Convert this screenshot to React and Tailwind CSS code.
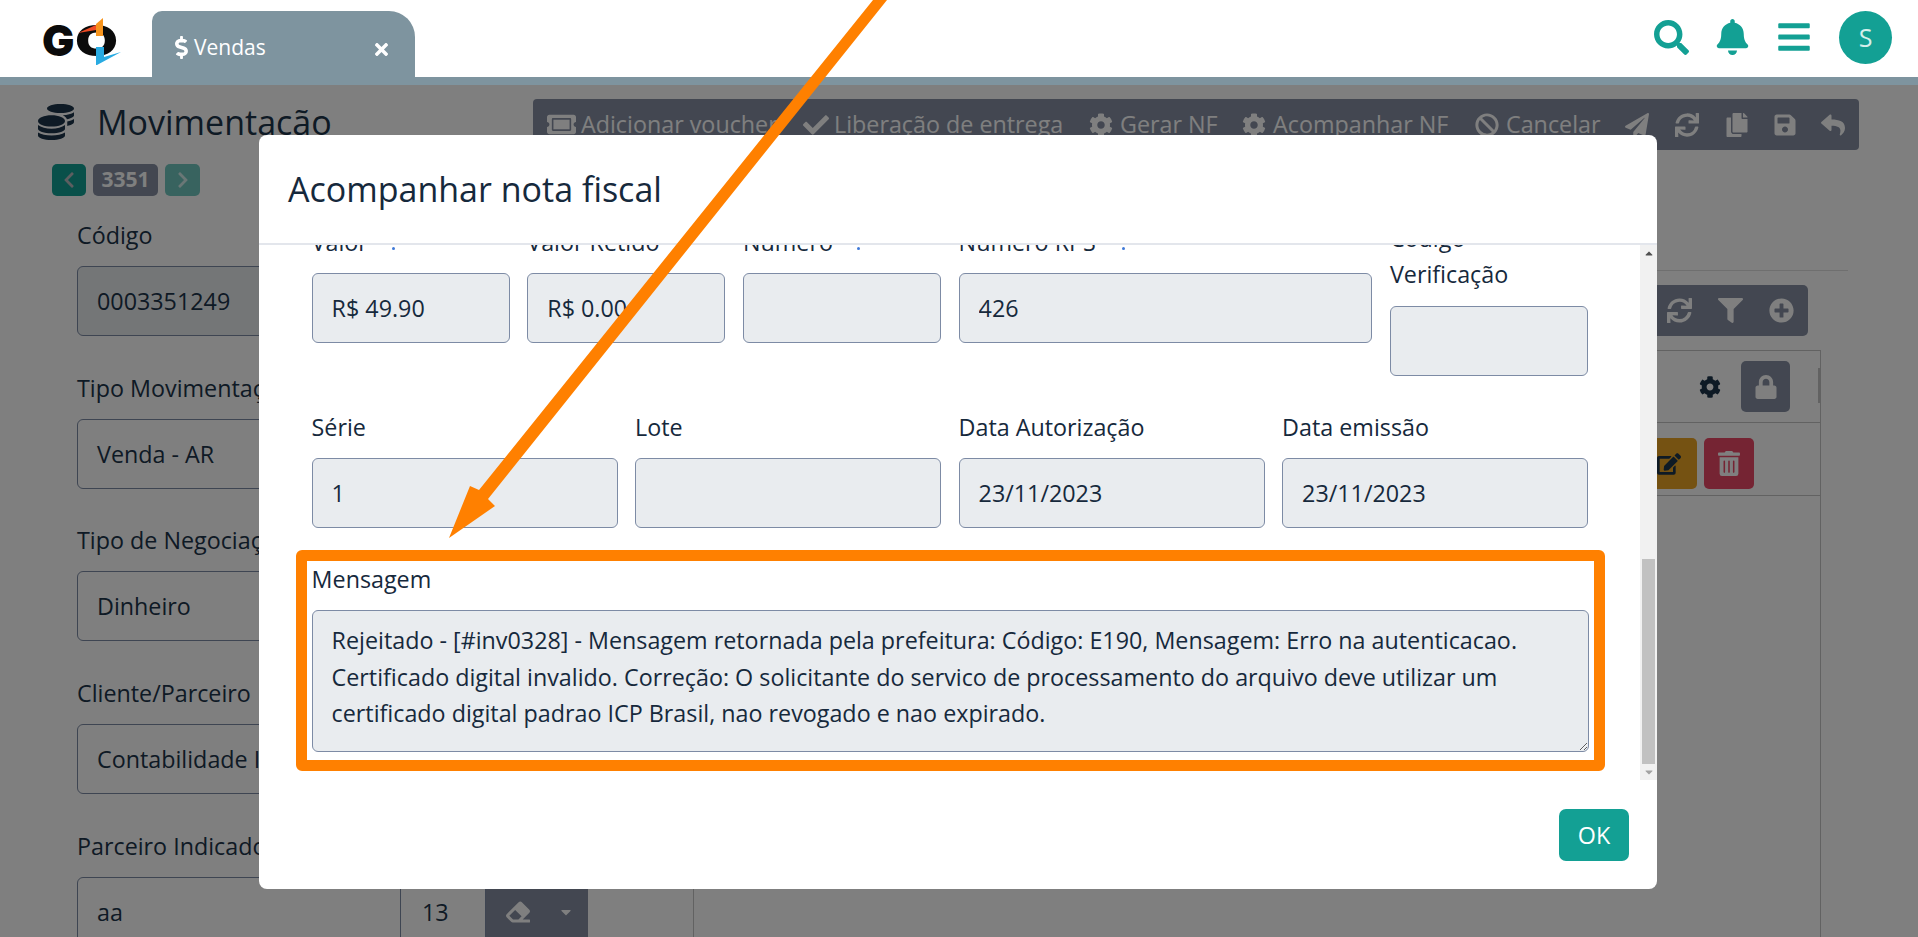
import React from "react";
import {
  FaBan,
  FaBars,
  FaBell,
  FaCaretDown,
  FaCheck,
  FaChevronLeft,
  FaChevronRight,
  FaCoins,
  FaCog,
  FaCopy,
  FaDollarSign,
  FaEdit,
  FaEraser,
  FaFilter,
  FaLock,
  FaPaperPlane,
  FaPlusCircle,
  FaReply,
  FaSave,
  FaSearch,
  FaSync,
  FaTicketAlt,
  FaTimes,
  FaTrashAlt,
} from "react-icons/fa";

const FONT = "font-['Open_Sans','Noto_Sans',sans-serif]";

const Logo = () => (
  <svg width="100" height="65" viewBox="0 0 100 65" className="ml-[30px] mt-[10px] shrink-0">
    <text x="12" y="46" fontFamily="Inter, 'Liberation Sans', sans-serif" fontWeight="900" fontSize="43" fill="#0b0b0b">
      G
    </text>
    <text
      x="45"
      y="46"
      textLength="43"
      lengthAdjust="spacingAndGlyphs"
      fontFamily="Inter, 'Liberation Sans', sans-serif"
      fontWeight="900"
      fontSize="43"
      fill="#0b0b0b"
    >
      O
    </text>
    <path d="M48 23 L66 15 L66 20 Z" fill="#ef4a23" />
    <path d="M66 14 L73 8 L73 26 L66 26 Z" fill="#f7941d" />
    <path d="M66 37 L74 37 L74 47 L91 42 L67 55 L66 55 Z" fill="#29abe2" />
  </svg>
);

const PageField = ({ label, value, shaded, className = "mb-[34px]" }) => (
  <div className={className}>
    <label className="block h-9 leading-9 mb-[13px] whitespace-nowrap">{label}</label>
    <div
      className={`h-[70px] w-[560px] flex items-center px-[19px] rounded-md border border-[#7d8ba5] whitespace-nowrap ${
        shaded ? "bg-[#e9ecef]" : "bg-white"
      }`}
    >
      {value}
    </div>
  </div>
);

const ToolItem = ({ width, icon, text, gap = "gap-[7px]" }) => (
  <div className={`flex items-center shrink-0 whitespace-nowrap ${gap} ${width}`}>
    {icon}
    {text && <span>{text}</span>}
  </div>
);

const Page = () => (
  <main className="flex flex-col pt-[14px] text-[#1c344a]">
    {/* titulo + toolbar */}
    <div className="flex items-start justify-between pl-[38px] pr-[59px]">
      <div className="flex items-center gap-[23px] h-[46px]">
        <FaCoins className="w-9 h-9" />
        <h1 className="text-[34px] font-medium whitespace-nowrap">Movimentação</h1>
      </div>
      <div className="flex items-center h-[51px] w-[1326px] pl-[14px] rounded-[4px] bg-[#868fa3] text-white text-[23.3px]">
        <ToolItem width="w-[256px]" gap="gap-[5px]" icon={<FaTicketAlt className="w-[29px] h-[29px]" />} text="Adicionar voucher" />
        <ToolItem width="w-[286px]" gap="gap-[5px]" icon={<FaCheck className="w-[26px] h-[26px]" />} text="Liberação de entrega" />
        <ToolItem width="w-[153px]" icon={<FaCog className="w-6 h-6" />} text="Gerar NF" />
        <ToolItem width="w-[233px]" icon={<FaCog className="w-6 h-6" />} text="Acompanhar NF" />
        <ToolItem width="w-[150px]" icon={<FaBan className="w-6 h-6" />} text="Cancelar" />
        <ToolItem width="w-[50px]" icon={<FaPaperPlane className="w-6 h-6" />} />
        <ToolItem width="w-[50px]" icon={<FaSync className="w-6 h-6" />} />
        <ToolItem width="w-[48px]" icon={<FaCopy className="w-6 h-6" />} />
        <ToolItem width="w-[48px]" icon={<FaSave className="w-6 h-6" />} />
        <ToolItem width="w-[28px]" icon={<FaReply className="w-6 h-6" />} />
      </div>
    </div>

    <div className="flex mt-[14px]">
      {/* formulario */}
      <div className="w-[693px] shrink-0 pl-[77px]">
        <div className="flex gap-[7px] -ml-[25px] mb-[21px] h-8">
          <button className="w-[34px] flex items-center justify-center rounded-[5px] bg-[#13a094] text-[#b8bcc0]">
            <FaChevronLeft className="w-[18px] h-[18px]" />
          </button>
          <span className="w-[65px] flex items-center justify-center rounded-[5px] bg-[#868fa3] text-white text-[21px] font-bold">
            3351
          </span>
          <button className="w-[35px] flex items-center justify-center rounded-[5px] bg-[#13a094]/60 text-white/70">
            <FaChevronRight className="w-[18px] h-[18px]" />
          </button>
        </div>
        <div className="text-[23.3px]">
          <PageField label="Código" value="0003351249" shaded />
          <PageField label="Tipo Movimentação" value="Venda - AR" className="mb-[33px]" />
          <PageField label="Tipo de Negociação" value="Dinheiro" />
          <PageField label="Cliente/Parceiro" value="Contabilidade I" />
          <div>
            <label className="block h-9 leading-9 mb-[13px] whitespace-nowrap">Parceiro Indicador</label>
            <div className="flex h-[70px]">
              <div className="w-[324px] flex items-center px-[19px] rounded-l-md border border-[#7d8ba5]">aa</div>
              <div className="w-[85px] flex items-center px-[21px] border-y border-r border-[#7d8ba5]">13</div>
              <div className="w-[102px] flex items-center pl-[20px] gap-[28px] bg-[#868fa3] text-white">
                <FaEraser className="w-6 h-6" />
                <FaCaretDown className="w-4 h-4" />
              </div>
            </div>
          </div>
        </div>
      </div>

      {/* painel direito */}
      <div className="w-[1128px] shrink-0">
        <div className="h-px w-[1155px] mt-[106px] bg-[#dedede]" />
        <div className="flex justify-end mt-[14px] mr-[13px]">
          <div className="flex items-center gap-[26px] h-[51px] pl-[16px] pr-[14px] rounded-[5px] bg-[#868fa3] text-white">
            <FaSync className="w-[25px] h-[25px]" />
            <FaFilter className="w-[25px] h-[25px]" />
            <FaPlusCircle className="w-[25px] h-[25px]" />
          </div>
        </div>
        <div className="mt-[14px] h-[600px] border border-[#c4c4c4]">
          <div className="relative flex items-center justify-end gap-[20px] h-[72px] pr-[30px] border-b border-[#c4c4c4]">
            <FaCog className="w-[22px] h-[22px]" />
            <span className="w-[49px] h-[51px] flex items-center justify-center rounded-[5px] bg-[#868fa3] text-white">
              <FaLock className="w-6 h-6" />
            </span>
            <span className="absolute right-0 top-[17px] w-[2px] h-[35px] bg-[#c4c4c4]" />
          </div>
          <div className="flex items-start justify-end gap-[7px] h-[73px] pt-[15px] pr-[66px] border-b border-[#c4c4c4]">
            <span className="w-[57px] h-[51px] flex items-center justify-center rounded-[5px] bg-[#eba425] text-[#1c344a]">
              <FaEdit className="w-6 h-6" />
            </span>
            <span className="w-[50px] h-[51px] flex items-center justify-center rounded-[5px] bg-[#ea4866] text-white">
              <FaTrashAlt className="w-[22px] h-[25px]" />
            </span>
          </div>
        </div>
      </div>
    </div>
  </main>
);

const Field = ({ label, value, className, dot, labelClass = "mb-[13px]" }) => (
  <div className={className}>
    <label className={`relative block leading-9 ${labelClass}`}>
      {label}
      {dot && <span className={`absolute bottom-[10px] w-[3px] h-[3px] rounded-full bg-[#3f79d8] ${dot}`} />}
    </label>
    <input
      readOnly
      value={value}
      className="block w-full h-[70px] px-[19px] rounded-md border border-[#7d8ba5] bg-[#e9ecef] outline-none"
    />
  </div>
);

const Modal = () => (
  <div className="absolute z-30 top-[135px] left-[259px] w-[1398px] h-[754px] flex flex-col rounded-lg bg-white text-[#16293c]">
    <div className="h-[110px] shrink-0 flex items-center pl-[29px] border-b-2 border-[#e3e6ec]">
      <h2 className="text-[34px] font-medium">Acompanhar nota fiscal</h2>
    </div>

    <div className="flex h-[535px] shrink-0">
      <div className="flex-1 min-w-0 overflow-hidden pl-[52.6px] pr-[52px] text-[23.3px]">
        <div className="grid grid-cols-12 gap-x-[17.6px] items-start -mt-[21px]">
          <Field className="col-span-2" label="Valor" value="R$ 49.90" dot="left-[80px]" />
          <Field className="col-span-2" label="Valor Retido" value="R$ 0.00" />
          <Field className="col-span-2" label="Número" value="" dot="left-[114px]" />
          <Field className="col-span-4" label="Número RPS" value="426" dot="left-[163px]" />
          <Field
            className="col-span-2 -mt-[4px]"
            labelClass="mb-[14px]"
            label={<>Código<br />Verificação</>}
            value=""
          />
        </div>
        <div className="grid grid-cols-12 gap-x-[17.6px] mt-[33px]">
          <Field className="col-span-3" label="Série" value="1" />
          <Field className="col-span-3" label="Lote" value="" />
          <Field className="col-span-3" label="Data Autorização" value="23/11/2023" />
          <Field className="col-span-3" label="Data emissão" value="23/11/2023" />
        </div>

        {/* destaque em laranja */}
        <div className="mt-[22px] -ml-[16px] -mr-[17px] px-[5px] pb-[8px] rounded-md border-[11px] border-[#ff8000]">
          <label className="block leading-9 mb-[13px]">Mensagem</label>
          <textarea
            readOnly
            value="Rejeitado - [#inv0328] - Mensagem retornada pela prefeitura: Código: E190, Mensagem: Erro na autenticacao. Certificado digital invalido. Correção: O solicitante do servico de processamento do arquivo deve utilizar um certificado digital padrao ICP Brasil, nao revogado e nao expirado."
            className="block w-full h-[142px] px-[19px] pt-[11px] pb-[10px] leading-[36.5px] rounded-md border border-[#7d8ba5] bg-[#e9ecef] outline-none"
          />
        </div>
      </div>

      {/* barra de rolagem */}
      <div className="relative w-[17px] shrink-0 bg-[#f1f1f1] flex flex-col items-center">
        <FaCaretDown className="w-3 h-3 mt-[3px] rotate-180 text-[#505050]" />
        <div className="w-[13px] h-[205px] mt-[299px] bg-[#c1c1c1]" />
        <FaCaretDown className="w-3 h-3 mt-[2px] text-[#a3a3a3]" />
      </div>
    </div>

    <div className="flex-1 flex justify-end pt-[29px] pr-[28px]">
      <button className="w-[70px] h-[52px] rounded-[7px] bg-[#13a094] text-white text-[23.3px]">OK</button>
    </div>
  </div>
);

const App = () => {
  return (
    <div className={`relative w-[1918px] h-[937px] overflow-hidden bg-white ${FONT}`}>
      {/* topo */}
      <header className="relative z-20 flex bg-white h-[77px]">
        <div className="w-[152px] shrink-0">
          <Logo />
        </div>
        <div className="flex items-center w-[263px] h-[66px] mt-[11px] pl-[23px] pr-[24px] pt-[7px] rounded-tl-[10px] rounded-tr-[26px] bg-[#7e949f] text-white text-[21px]">
          <FaDollarSign className="w-[15px] h-[23px] -ml-[1px]" />
          <span className="ml-[5px]">Vendas</span>
          <FaTimes className="w-[19px] h-[19px] ml-auto mt-[4px]" />
        </div>
        <div className="ml-auto flex items-center pr-[26px] text-[#13a094]">
          <FaSearch className="w-[35px] h-[35px] -mt-[3px]" />
          <FaBell className="w-[33px] h-[36px] ml-[27px] -mt-[3px]" />
          <FaBars className="w-[32px] h-[36px] ml-[29px] -mt-[3px]" />
          <span className="w-[53px] h-[53px] ml-[29px] -mt-[2px] flex items-center justify-center rounded-full bg-[#13a094] text-[#d5efec] text-[25px]">
            S
          </span>
        </div>
      </header>
      <div className="relative z-20 h-[8px] bg-[#7e949f]" />

      <Page />

      {/* fundo do modal */}
      <div className="absolute z-10 inset-x-0 bottom-0 top-[85px] bg-black/50" />
      <Modal />

      {/* seta de anotacao */}
      <svg className="absolute z-40 inset-0 pointer-events-none" width="1918" height="937" viewBox="0 0 1918 937">
        <path d="M873 0 L887 0 L488 499 L495 506 L449 538 L470 486 L479 490 Z" fill="#ff8000" />
      </svg>
    </div>
  );
};

export default App;
